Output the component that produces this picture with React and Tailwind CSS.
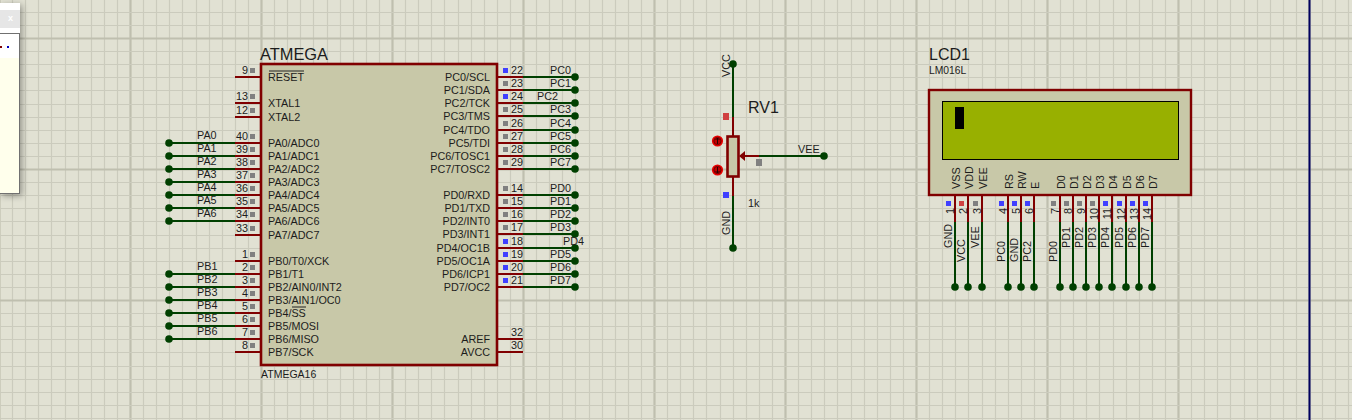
import React from "react";

const RED = "#800000";
const GREEN = "#004000";
const BLUE = "#4040ff";
const GREY = "#808080";

const STEP = 13.1;

const leftPins = [
  { n: "9", y: 77, label: "RESET", bar: [269, 304] },
  { n: "13", y: 103, label: "XTAL1" },
  { n: "12", y: 117, label: "XTAL2" },
  { n: "40", y: 143, label: "PA0/ADC0", net: "PA0" },
  { n: "39", y: 156, label: "PA1/ADC1", net: "PA1" },
  { n: "38", y: 169, label: "PA2/ADC2", net: "PA2" },
  { n: "37", y: 182, label: "PA3/ADC3", net: "PA3" },
  { n: "36", y: 195, label: "PA4/ADC4", net: "PA4" },
  { n: "35", y: 208, label: "PA5/ADC5", net: "PA5" },
  { n: "34", y: 221, label: "PA6/ADC6", net: "PA6" },
  { n: "33", y: 235, label: "PA7/ADC7" },
  { n: "1", y: 261, label: "PB0/T0/XCK" },
  { n: "2", y: 274, label: "PB1/T1", net: "PB1" },
  { n: "3", y: 287, label: "PB2/AIN0/INT2", net: "PB2" },
  { n: "4", y: 300, label: "PB3/AIN1/OC0", net: "PB3" },
  { n: "5", y: 313, label: "PB4/SS", net: "PB4", bar: [292, 306] },
  { n: "6", y: 326, label: "PB5/MOSI", net: "PB5" },
  { n: "7", y: 339, label: "PB6/MISO", net: "PB6" },
  { n: "8", y: 352, label: "PB7/SCK" },
];

const rightPins = [
  { n: "22", y: 77, label: "PC0/SCL", net: "PC0", on: true },
  { n: "23", y: 90, label: "PC1/SDA", net: "PC1" },
  { n: "24", y: 103, label: "PC2/TCK", net: "PC2", on: true, netX: 537 },
  { n: "25", y: 116, label: "PC3/TMS", net: "PC3" },
  { n: "26", y: 130, label: "PC4/TDO", net: "PC4" },
  { n: "27", y: 143, label: "PC5/TDI", net: "PC5" },
  { n: "28", y: 156, label: "PC6/TOSC1", net: "PC6" },
  { n: "29", y: 169, label: "PC7/TOSC2", net: "PC7" },
  { n: "14", y: 195, label: "PD0/RXD", net: "PD0" },
  { n: "15", y: 208, label: "PD1/TXD", net: "PD1" },
  { n: "16", y: 221, label: "PD2/INT0", net: "PD2" },
  { n: "17", y: 234, label: "PD3/INT1", net: "PD3" },
  { n: "18", y: 248, label: "PD4/OC1B", net: "PD4", on: true, netX: 563 },
  { n: "19", y: 261, label: "PD5/OC1A", net: "PD5", on: true },
  { n: "20", y: 274, label: "PD6/ICP1", net: "PD6", on: true },
  { n: "21", y: 287, label: "PD7/OC2", net: "PD7", on: true },
  { n: "32", y: 339, label: "AREF", noSquare: true },
  { n: "30", y: 352, label: "AVCC", noSquare: true },
];

const lcdPins = [
  { n: "1", x: 955, label: "VSS", net: "GND", low: false, color: BLUE },
  { n: "2", x: 968, label: "VDD", net: "VCC", low: true, color: "#d04040" },
  { n: "3", x: 982, label: "VEE", net: "VEE", low: false, color: GREY },
  { n: "4", x: 1008, label: "RS", net: "PC0", low: true, color: BLUE },
  { n: "5", x: 1021, label: "RW", net: "GND", low: true, color: BLUE },
  { n: "6", x: 1034, label: "E", net: "PC2", low: true, color: BLUE },
  { n: "7", x: 1060, label: "D0", net: "PD0", low: true, color: GREY },
  { n: "8", x: 1073, label: "D1", net: "PD1", color: GREY },
  { n: "9", x: 1086, label: "D2", net: "PD2", color: GREY },
  { n: "10", x: 1099, label: "D3", net: "PD3", color: GREY },
  { n: "11", x: 1112, label: "D4", net: "PD4", color: BLUE },
  { n: "12", x: 1126, label: "D5", net: "PD5", color: BLUE },
  { n: "13", x: 1139, label: "D6", net: "PD6", color: BLUE },
  { n: "14", x: 1152, label: "D7", net: "PD7", color: BLUE },
];

const Grid = () => {
  const lines = [];
  for (let i = -10; i < 100; i++) {
    const x = Math.round(130 + i * STEP);
    const major = i % 10 === 0;
    lines.push(
      <line
        key={`v${i}`}
        x1={x + 0.5}
        x2={x + 0.5}
        y1={0}
        y2={420}
        stroke={major ? "#bfbfaf" : "#cbcbbd"}
        strokeWidth={major ? 2.2 : 1.2}
      />
    );
  }
  for (let i = -3; i < 32; i++) {
    const y = Math.round(38 + i * STEP);
    const major = i % 10 === 0;
    lines.push(
      <line
        key={`h${i}`}
        x1={0}
        x2={1352}
        y1={y + 0.5}
        y2={y + 0.5}
        stroke={major ? "#bfbfaf" : "#cbcbbd"}
        strokeWidth={major ? 2.2 : 1.2}
      />
    );
  }
  return <g>{lines}</g>;
};

const Atmega = () => (
  <g>
    <rect x={261} y={64} width={236} height={301} fill="#c8c8a8" stroke={RED} strokeWidth={2.6} />
    <text x={260} y={60} className="text-[16.4px]">ATMEGA</text>
    <text x={261} y={378} className="text-[10.5px]">ATMEGA16</text>

    {leftPins.map((p) => (
      <g key={p.n}>
        {p.net && <line x1={169} x2={235} y1={p.y} y2={p.y} stroke={GREEN} strokeWidth={2} />}
        {p.net && <circle cx={169} cy={p.y} r={3.8} fill={GREEN} />}
        <line x1={235} x2={261} y1={p.y} y2={p.y} stroke={RED} strokeWidth={2} />
        <rect x={250} y={p.y - 9} width={5} height={5} fill={GREY} />
        <text x={248} y={p.y - 3} textAnchor="end" className="text-[10.8px]">{p.n}</text>
        {p.net && <text x={197} y={p.y - 4} className="text-[10.8px]">{p.net}</text>}
        <text x={268} y={p.y + 4} className="text-[10.8px]">{p.label}</text>
        {p.bar && <line x1={p.bar[0]} x2={p.bar[1]} y1={p.y - 6} y2={p.y - 6} stroke="#222" strokeWidth={1} />}
      </g>
    ))}

    {rightPins.map((p) => (
      <g key={p.n}>
        {p.net && <line x1={523} x2={575} y1={p.y} y2={p.y} stroke={GREEN} strokeWidth={2} />}
        {p.net && <circle cx={575} cy={p.y} r={3.8} fill={GREEN} />}
        <line x1={497} x2={523} y1={p.y} y2={p.y} stroke={RED} strokeWidth={2} />
        {!p.noSquare && <rect x={503} y={p.y - 9} width={5} height={5} fill={p.on ? BLUE : GREY} />}
        <text x={523} y={p.y - 3} textAnchor="end" className="text-[10.8px]">{p.n}</text>
        {p.net && <text x={p.netX || 550} y={p.y - 3} className="text-[10.8px]">{p.net}</text>}
        <text x={490} y={p.y + 4} textAnchor="end" className="text-[10.8px]">{p.label}</text>
      </g>
    ))}
  </g>
);

const Probe = ({ cy, up }) => (
  <g>
    <circle cx={717.5} cy={cy} r={5.6} fill="#e80000" />
    <circle cx={717.5} cy={cy} r={3.6} fill="#c00000" stroke="#700000" strokeWidth={1} />
    <path
      d={up ? `M717.5 ${cy + 3}V${cy - 3}M715.5 ${cy - 1}L717.5 ${cy - 3}L719.5 ${cy - 1}` : `M717.5 ${cy - 3}V${cy + 3}M715.5 ${cy + 1}L717.5 ${cy + 3}L719.5 ${cy + 1}`}
      fill="none"
      stroke="#300000"
      strokeWidth={1}
    />
  </g>
);

const Pot = () => (
  <g>
    <line x1={733} x2={733} y1={64} y2={117} stroke={GREEN} strokeWidth={2} />
    <line x1={733} x2={733} y1={117} y2={136} stroke={RED} strokeWidth={2} />
    <line x1={733} x2={733} y1={176} y2={196} stroke={RED} strokeWidth={2} />
    <line x1={733} x2={733} y1={196} y2={248} stroke={GREEN} strokeWidth={2} />
    <circle cx={733} cy={64} r={3.8} fill={GREEN} />
    <circle cx={733} cy={248} r={3.8} fill={GREEN} />
    <rect x={727.5} y={136.5} width={11} height={40} fill="#c8c8a8" stroke={RED} strokeWidth={2.6} />
    <line x1={742} x2={759} y1={156} y2={156} stroke={RED} strokeWidth={2} />
    <line x1={759} x2={824} y1={156} y2={156} stroke={GREEN} strokeWidth={2} />
    <path d="M739 156L745 151V161Z" fill={RED} />
    <circle cx={824} cy={156} r={3.8} fill={GREEN} />
    <rect x={723} y={113} width={6} height={7} fill="#d04040" />
    <rect x={723} y={192} width={6} height={6} fill={BLUE} />
    <rect x={756} y={159} width={6} height={7} fill={GREY} />
    <Probe cy={141} up />
    <Probe cy={170} />
    <text x={748} y={113} className="text-[16px]">RV1</text>
    <text x={748} y={207} className="text-[10.8px]">1k</text>
    <text x={798} y={153} className="text-[10.8px]">VEE</text>
    <text transform="translate(730 77) rotate(-90)" className="text-[10.8px]">VCC</text>
    <text transform="translate(730 235) rotate(-90)" className="text-[10.8px]">GND</text>
  </g>
);

const Lcd = () => (
  <g>
    <text x={929} y={60} className="text-[16px]">LCD1</text>
    <text x={929} y={74} className="text-[10.3px]">LM016L</text>
    <rect x={929} y={90} width={262} height={105} fill="#c8c8a8" stroke={RED} strokeWidth={2.4} />
    <rect x={942.5} y={101.5} width={236} height={58} fill="#98b000" stroke="#000" strokeWidth={1} />
    <rect x={955} y={107} width={9} height={22} fill="#000" />
    {lcdPins.map((p) => (
      <g key={p.n}>
        <line x1={p.x} x2={p.x} y1={195} y2={222} stroke={RED} strokeWidth={2} />
        <line x1={p.x} x2={p.x} y1={222} y2={287} stroke={GREEN} strokeWidth={2} />
        <circle cx={p.x} cy={287} r={3.8} fill={GREEN} />
        <rect x={p.x - 9} y={201} width={5} height={5} fill={p.color} />
        <text transform={`translate(${p.x - 1} 208) rotate(-90)`} textAnchor="end" className="text-[10.8px]">{p.n}</text>
        <text transform={`translate(${p.x + 5} 189) rotate(-90)`} className="text-[10.8px]">{p.label}</text>
        <text transform={`translate(${p.x - 3} ${p.low ? 262 : 248}) rotate(-90)`} className="text-[10.8px]">{p.net}</text>
      </g>
    ))}
  </g>
);

const Popup = () => (
  <div className="absolute left-0 top-[3px] w-[20px] h-[191px] flex flex-col bg-white shadow-[2px_2px_6px_rgba(0,0,0,0.35)]">
    <div className="mt-[7px] h-[18px] bg-[#e6e6e6] flex items-center justify-center text-white text-[9px] font-bold pl-[1px]">x</div>
    <div className="mt-[5px] flex-1 flex flex-col border-t border-r border-b border-[#707070]">
      <div className="h-[24px] relative">
        <div className="absolute left-0 top-[12px] w-[2px] h-[2px] bg-[#800000]" />
        <div className="absolute left-[7px] top-[12px] w-[2px] h-[2px] bg-[#0000c0]" />
      </div>
      <div className="flex-1 bg-[#ffffec]" />
    </div>
  </div>
);

export default function App() {
  return (
    <div className="relative w-[1352px] h-[420px] overflow-hidden bg-[#e1e1d3] font-['Liberation_Sans',Arial,sans-serif]">
      <svg width={1352} height={420} className="block fill-[#1c1c1c]">
        <Grid />
        <line x1={1309.5} x2={1309.5} y1={0} y2={420} stroke="#000060" strokeWidth={2} />
        <Atmega />
        <Pot />
        <Lcd />
      </svg>
      <Popup />
    </div>
  );
}
